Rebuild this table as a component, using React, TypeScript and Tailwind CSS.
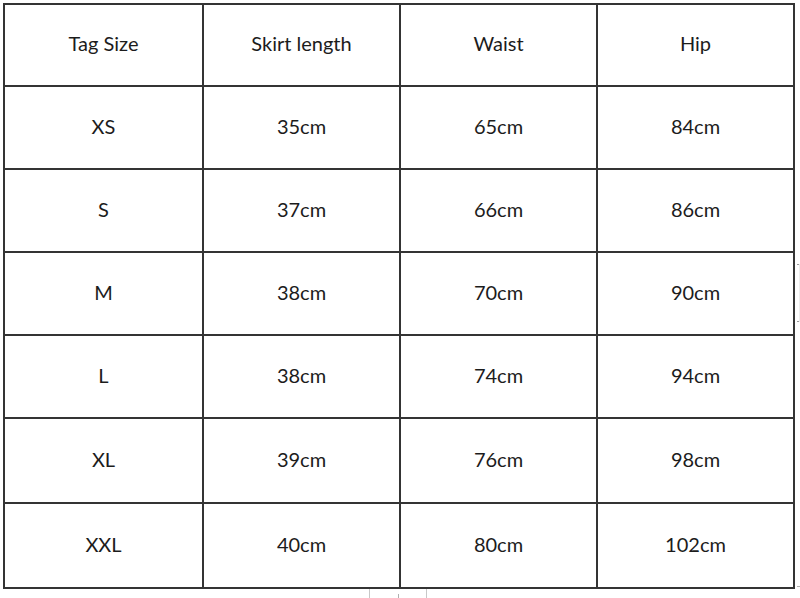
const header = ['Tag Size', 'Skirt length', 'Waist', 'Hip']

const rows = [
  ['XS', '35cm', '65cm', '84cm'],
  ['S', '37cm', '66cm', '86cm'],
  ['M', '38cm', '70cm', '90cm'],
  ['L', '38cm', '74cm', '94cm'],
  ['XL', '39cm', '76cm', '98cm'],
  ['XXL', '40cm', '80cm', '102cm'],
]

// row heights measured off the screenshot, header first
const heights = ['h-[82px]', 'h-[83px]', 'h-[83px]', 'h-[83px]', 'h-[83px]', 'h-[85px]', 'h-[85px]']

function Cell(props: { text: string; h: string }) {
  return (
    <div
      className={`${props.h} flex items-center justify-center border-r-2 border-b-2 border-[#343434] pb-[4px] text-[20px] text-[#1c1c1c]`}
    >
      {props.text}
    </div>
  )
}

export default function App() {
  const all = [header, ...rows]
  return (
    <div className="relative h-[598px] w-[800px] overflow-hidden bg-white font-['Lato','Open_Sans',sans-serif]">
      <div className="ml-[3px] pt-[3px]">
        <div className="grid w-max grid-cols-[199px_197px_197px_197px] border-t-2 border-l-2 border-[#343434]">
          {all.map((row, i) =>
            row.map((text, j) => <Cell key={`${i}-${j}`} text={text} h={heights[i]} />),
          )}
        </div>
      </div>

      {/* scraps of the next sheet peeking in at the edges */}
      <div className="absolute top-[589px] left-[369px] h-[9px] w-[58px] border-x border-[#c8c8c8]">
        <span className="absolute top-[5px] left-[28px] h-[4px] w-px bg-[#b0b0b0]" />
      </div>
      <span className="absolute top-[264px] left-[797px] h-px w-[3px] bg-[#9a9a9a]" />
      <span className="absolute top-[321px] left-[797px] h-px w-[3px] bg-[#9a9a9a]" />
      <span className="absolute top-[264px] left-[799px] h-[58px] w-px bg-[#ececec]" />
      <span className="absolute top-[586px] left-[797px] h-px w-[3px] bg-[#b0b0b0]" />
    </div>
  )
}
